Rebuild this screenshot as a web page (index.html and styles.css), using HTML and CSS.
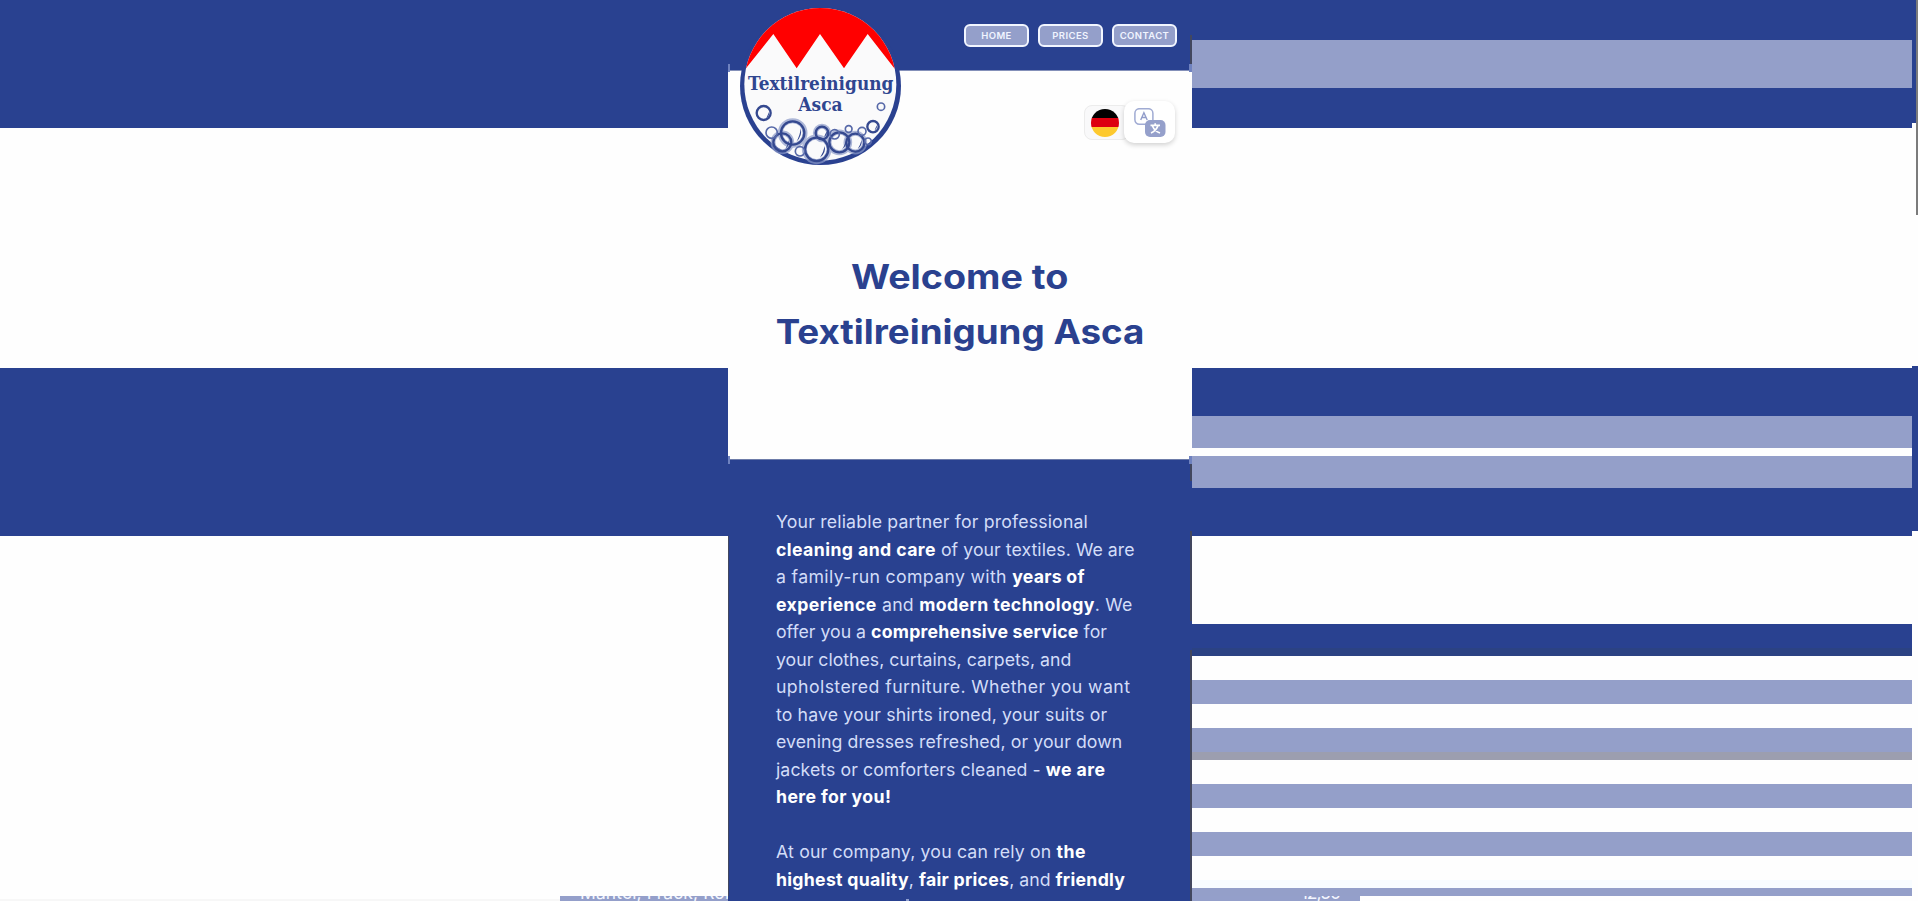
FILE: index.html
```html
<!DOCTYPE html>
<html lang="en">
<head>
<meta charset="utf-8">
<title>Textilreinigung Asca</title>
<link rel="stylesheet" href="styles.css">
</head>
<body>
<div class="page">
  <div class="bands left">
    <i class="blue h128"></i><i class="h240"></i><i class="blue h168"></i>
  </div>
  <main class="panel">
    <header class="top">
      <nav class="nav"><a>HOME</a><a>PRICES</a><a>CONTACT</a></nav>
      <svg class="logo" viewBox="54 18 495 483" width="165" height="161">
        <ellipse cx="301.500" cy="258" rx="241.500" ry="237" fill="#2a4190"/>
        <clipPath id="disc"><ellipse cx="301" cy="253" rx="228" ry="229"/></clipPath>
        <g clip-path="url(#disc)">
          <rect x="54" y="18" width="495" height="483" fill="#fafafb"/>
          <path d="M54 18H549V205H523L443 102L372 205L300 102L230 205L160 102L78 205H54Z" fill="#f00"/>
        </g>
        <g class="name">
          <text x="84" y="269" textLength="436" lengthAdjust="spacingAndGlyphs">Textilreinigung</text>
          <text x="235" y="334" textLength="133" lengthAdjust="spacingAndGlyphs">Asca</text>
        </g>
        <g fill="none" stroke="#8c9ac9" stroke-width="15" opacity=".7">
          <circle cx="218" cy="399" r="37"/><circle cx="290" cy="448" r="37"/><circle cx="187" cy="427" r="28"/><circle cx="358" cy="427" r="31"/><circle cx="406" cy="428" r="28"/><circle cx="306" cy="399" r="20"/>
        </g>
        <g fill="none" stroke="#34488f" stroke-width="7">
          <circle cx="131" cy="339" r="21"/><circle cx="218" cy="399" r="35"/><circle cx="187" cy="427" r="27"/><circle cx="290" cy="448" r="35"/><circle cx="358" cy="427" r="30"/><circle cx="406" cy="428" r="27"/><circle cx="306" cy="399" r="19"/><circle cx="459" cy="380" r="17"/>
          <g stroke-width="5" stroke="#5668a8"><circle cx="155" cy="398" r="17"/><circle cx="483" cy="320" r="11"/><circle cx="240" cy="454" r="14"/><circle cx="344" cy="403" r="14"/><circle cx="386" cy="387" r="10"/><circle cx="426" cy="394" r="12"/><circle cx="444" cy="424" r="10"/></g>
        </g>
        <g fill="#34488f"><path d="M139 354Q149 348 147 336Q143 346 139 354M229 425Q248 408 242 385Q240 408 229 425M300 473Q319 459 314 438Q310 459 300 473M366 448Q382 437 379 418Q374 438 366 448M413 447Q427 437 425 419Q420 437 413 447M196 446Q210 436 207 420Q203 436 196 446M312 411Q323 405 320 394M464 391Q473 385 470 376"/></g>
      </svg>
    </header>
    <section class="hero">
      <div class="lang">
        <span class="flagbox"><span class="flag"></span></span>
        <span class="switch">
          <svg viewBox="0 0 32 29" width="32" height="29">
            <rect x=".9" y=".7" width="18" height="15.600" rx="4.500" fill="#fff" stroke="#a0abd3" stroke-width="1.500"/>
            <path d="M6.700 12L9.900 4.700L13.200 12M7.900 9.500H12" fill="none" stroke="#929dca" stroke-width="1.400"/>
            <rect x="11" y="12" width="20.500" height="17" rx="5" fill="#95a0cb"/>
            <path d="M16.500 17.300H26M21.200 15.300V17.300M24 17.500Q22.500 22.500 17 25M18.500 18Q20.500 23 26 25" fill="none" stroke="#fff" stroke-width="1.700"/>
          </svg>
        </span>
      </div>
      <h1><span class="t1">Welcome to</span><br><span class="t2">Textilreinigung Asca</span></h1>
    </section>
    <section class="copy">
      <p><span class="l1">Your reliable partner for professional</span><br>
      <span class="l2"><b>cleaning and care</b> of your textiles. We are</span><br>
      <span class="l3">a family-run company with <b>years of</b></span><br>
      <span class="l4"><b>experience</b> and <b>modern technology</b>. We</span><br>
      <span class="l5">offer you a <b>comprehensive service</b> for</span><br>
      <span class="l6">your clothes, curtains, carpets, and</span><br>
      <span class="l7">upholstered furniture. Whether you want</span><br>
      <span class="l8">to have your shirts ironed, your suits or</span><br>
      <span class="l9">evening dresses refreshed, or your down</span><br>
      <span class="l10">jackets or comforters cleaned - <b>we are</b></span><br>
      <span class="l11"><b>here for you!</b></span></p>
      <p><span class="l12">At our company, you can rely on <b>the</b></span><br>
      <span class="l13"><b>highest quality</b>, <b>fair prices</b>, and <b>friendly</b></span></p>
    </section>
    <i class="notch n1"></i><i class="notch n2"></i><i class="notch n3"></i><i class="notch n4"></i>
    <i class="edge e1"></i><i class="edge e2"></i><i class="edge e3"></i><i class="edge e4"></i><i class="edge e5"></i>
    <i class="tick"></i>
  </main>
  <div class="bands right">
    <i class="blue h40"></i><i class="pale h48"></i><i class="blue h40"></i><i class="h240"></i>
    <i class="blue h48"></i><i class="pale h32"></i><i class="h8"></i><i class="pale h32"></i><i class="blue h48"></i>
    <i class="h88"></i><i class="blue h24"></i><i class="teal h8"></i><i class="h24"></i><i class="pale h24"></i>
    <i class="h24"></i><i class="pale h24"></i><i class="grey h8"></i><i class="h24"></i><i class="pale h24"></i>
    <i class="h24"></i><i class="pale h24"></i><i class="h24"></i><i class="tint h8"></i><i class="pale h8"></i>
  </div>
  <div class="bands rim">
    <i class="blue h123"></i><i class="h243"></i><i class="blue h165"></i>
  </div>
  <div class="pricerow"><span>Mantel, Frack, Robe</span><span class="price">12,50</span></div>
  <i class="floor"></i>
  <i class="thumb"></i>
</div>
</body>
</html>
```
FILE: styles.css
```css
* { box-sizing: border-box; }
body { margin: 0; background: #fff; font-family: Inter, "Open Sans", sans-serif; }
.page { position: relative; display: grid; grid-template-columns: 728px 464px 720px 6px; height: 901px; overflow: hidden; background: #fefefe; }
.bands { display: flex; flex-direction: column; }
.bands i { display: block; flex: none; }
.bands .blue { background: #294190; }
.bands .pale { background: #949fc9; }
.bands .teal { background: #2b4283; }
.bands .grey { background: #9c9eaf; }
.bands .tint { background: #f8fcff; }
.h8 { height: 8px; } .h24 { height: 24px; } .h32 { height: 32px; } .h40 { height: 40px; }
.h48 { height: 48px; } .h88 { height: 88px; } .h123 { height: 123px; } .h128 { height: 128px; }
.h165 { height: 165px; } .h168 { height: 168px; } .h240 { height: 240px; } .h243 { height: 243px; }

.panel { position: relative; z-index: 2; height: 901px; overflow: hidden; background: #294190; }
.top { position: relative; height: 71px; border-bottom: 1px solid #8490b9; padding: 24px 15px 0; }
.nav { display: flex; justify-content: flex-end; gap: 9px; }
.nav a { width: 65px; height: 23px; border: 2px solid #f2f6ff; border-radius: 6px; background: #949fca; color: #f0f4ff; font-size: 9.500px; font-weight: 600; line-height: 20px; display: flex; justify-content: center; letter-spacing: .4px; white-space: nowrap; }
.logo { position: absolute; left: 10px; top: 6px; z-index: 1; }
.name { font: 700 55px "DejaVu Serif", serif; fill: #2f4690; }

.hero { height: 389px; background: #fefefe; border-bottom: 1px solid #6d7ca9; padding-top: 30px; }
.lang { display: flex; justify-content: flex-end; align-items: center; height: 42px; padding-right: 17px; }
.flagbox { width: 46px; height: 35px; margin-right: -6px; border: 1px solid #ececec; border-radius: 8px; background: #f9f9fa; padding: 3px 6px; margin-top: 1px; }
.flag { display: block; width: 28px; height: 28px; border-radius: 50%; background: linear-gradient(#000 0 31%, #dd0010 31% 66%, #fdc92e 66%); }
.switch { position: relative; display: flex; align-items: center; justify-content: center; width: 51px; height: 42px; border-radius: 10px; background: #fff; box-shadow: 0 2px 5px rgba(0,0,0,.18); }
h1 { margin: 107px 0 0; text-align: center; color: #2a418f; font-size: 33.500px; font-weight: 700; line-height: 55px; white-space: nowrap; }
h1 span { display: inline-block; }
.t1 { transform: scaleX(1.125); }
.t2 { transform: scaleX(1.097); }

.copy { padding: 48px 0 0 48px; color: #d3ddf8; font-size: 17.700px; line-height: 27.540px; white-space: nowrap; }
.copy p { margin: 0 0 27.400px; }
.copy b { color: #fff; font-weight: 700; letter-spacing: .4px; }
.l1, .l12 { letter-spacing: .17px; }
.l2 { letter-spacing: .05px; }
.l3 { letter-spacing: .34px; }
.l4 { letter-spacing: .25px; }
.l7 { letter-spacing: .4px; }
.l8 { letter-spacing: .13px; }
.l9, .l10 { letter-spacing: .08px; }
.copy .l3 b, .copy .l5 b { letter-spacing: .25px; }
.copy .l13 b { letter-spacing: .28px; }

.notch { position: absolute; width: 2px; height: 8px; background: #6f82bf; }
.n1 { left: 0; top: 64px; } .n2 { left: 0; top: 456px; }
.n3 { right: 0; top: 64px; width: 3px; } .n4 { right: 0; top: 456px; width: 3px; }
.edge { position: absolute; width: 2px; right: 0; background: #42475f; }
.e1 { top: 35px; height: 29px; } .e2 { top: 464px; height: 17px; } .e3 { top: 531px; height: 90px; } .e4 { top: 650px; height: 251px; }
.e5 { left: 0; width: 1px; top: 536px; height: 360px; }
.tick { position: absolute; left: 178px; top: 899px; width: 3px; height: 2px; background: #8f9fd0; }

.pricerow { position: absolute; left: 560px; top: 896px; width: 800px; height: 5px; overflow: hidden; display: flex; justify-content: space-between; padding: 0 20px; background: #949fca; color: #f4f7ff; font-size: 17.500px; line-height: 24px; white-space: nowrap; }
.pricerow span { margin-top: -15px; letter-spacing: .1px; }
.pricerow .price { letter-spacing: -1px; }
.floor { position: absolute; left: 0; top: 899px; width: 560px; height: 2px; background: #f7f7f7; }
.thumb { position: absolute; right: 0; top: 0; width: 2px; height: 215px; background: #7b7b7b; }
```
